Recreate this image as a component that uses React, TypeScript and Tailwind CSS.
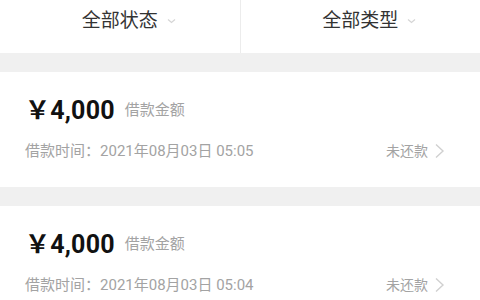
const font = { fontFamily: '"Roboto", "Noto Sans CJK SC", sans-serif' };

function Caret() {
  return (
    <svg width="9" height="6" viewBox="0 0 9 6" className="absolute left-full top-[11px] ml-[9px]">
      <path d="M1 1.5 L4.5 4.5 L8 1.5" fill="none" stroke="#d6d6d6" strokeWidth="1.3" />
    </svg>
  );
}

function Filter({ label, divider }: { label: string; divider?: boolean }) {
  return (
    <div className={`flex-1 flex justify-center pt-[7px] ${divider ? "border-r border-[#ececec]" : ""}`}>
      <span className="relative text-[19px] leading-[28px] text-[#333]">
        {label}
        <Caret />
      </span>
    </div>
  );
}

function LoanCard({ time }: { time: string }) {
  return (
    <div className="bg-white px-[25px] pt-[23px] pb-[26px]">
      <div className="flex items-center h-[30px]">
        <span className="text-[25px] font-bold text-[#111] leading-none tracking-[0.2px]">￥4,000</span>
        <span className="ml-[10px] text-[15px] text-[#a3a3a3] mt-[1px]">借款金额</span>
      </div>
      <div className="flex items-center justify-between h-[20px] mt-[16px]">
        <span className="text-[15px] text-[#a3a3a3]">借款时间：{time}</span>
        <span className="flex items-center text-[14px] text-[#a3a3a3] mr-[10px]">
          未还款
          <svg width="11" height="16" viewBox="0 0 11 16" className="ml-[6px]">
            <path d="M2 1.5 L9 8 L2 14.5" fill="none" stroke="#d0d0d0" strokeWidth="1.4" />
          </svg>
        </span>
      </div>
    </div>
  );
}

export default function App() {
  return (
    <div className="w-[480px] h-[300px] overflow-hidden bg-[#f0f0f0]" style={font}>
      <div className="flex h-[53px] bg-white">
        <Filter label="全部状态" divider />
        <Filter label="全部类型" />
      </div>
      <div className="mt-[19px] flex flex-col gap-[19px]">
        <LoanCard time="2021年08月03日 05:05" />
        <LoanCard time="2021年08月03日 05:04" />
      </div>
    </div>
  );
}
